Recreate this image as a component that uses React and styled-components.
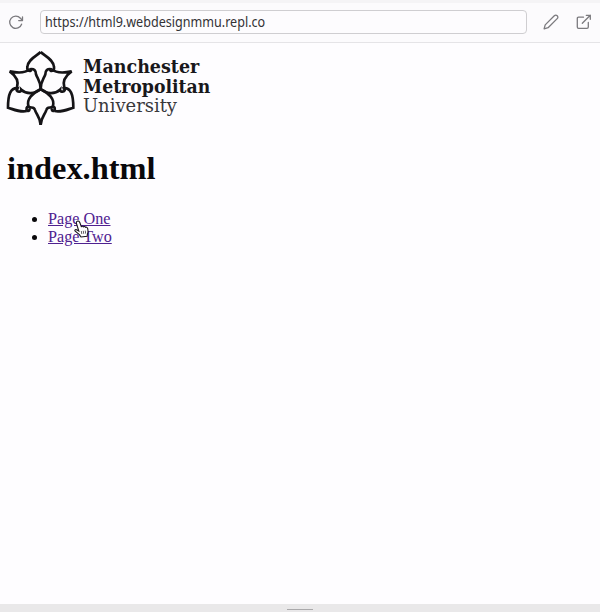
import React from "react";
import styled, { createGlobalStyle } from "styled-components";

const GlobalStyle = createGlobalStyle`
  * { box-sizing: border-box; }
  body { margin: 0; background: #fefdff; }
`;

const Browser = styled.div`
  display: flex;
  flex-direction: column;
  height: 612px;
  width: 600px;
  overflow: hidden;
  background: #fefdff;
`;

const Toolbar = styled.header`
  display: flex;
  align-items: center;
  height: 43px;
  flex: none;
  padding: 0 7px 1px 7px;
  background: #fcfbfd;
  border-top: 3px solid #f5f4f6;
  border-bottom: 1px solid #e5e4e7;
`;

const Address = styled.div`
  flex: none;
  width: 487px;
  height: 24px;
  margin-left: 15px;
  padding-left: 4px;
  border: 1px solid #cfced1;
  border-radius: 4px;
  background: #fdfcfe;
  color: #333235;
  font: 13.6px/22px "Noto Sans", sans-serif;
  white-space: nowrap;
`;

const AddressText = styled.span`
  display: inline-block;
  transform: scaleX(0.925);
  transform-origin: left;
`;

const ToolIcon = styled.svg`
  display: block;
  flex: none;
  width: 18px;
  height: 18px;
  margin-left: ${(p) => p.$gap || 0}px;
  fill: none;
  stroke: #7b7a7e;
  stroke-width: 1.3;
  stroke-linecap: round;
  stroke-linejoin: round;
`;

const Page = styled.main`
  flex: 1;
  padding: 2px 7px 0 0;
  color: #09080b;
  font-family: "Liberation Serif", "Times New Roman", serif;
`;

const Logo = styled.svg`
  display: block;
  width: 220px;
  height: 85px;
`;

const LogoName = styled.text`
  font-family: "DejaVu Serif", serif;
  font-size: 54px;
  font-weight: ${(p) => (p.$light ? 400 : 700)};
  fill: ${(p) => (p.$light ? "#39383b" : "#19181b")};
`;

const Heading = styled.h1`
  margin: 20px 0 0 7px;
  font-size: 32.4px;
  line-height: 37px;
`;

const Links = styled.ul`
  margin: 23px 0 0;
  padding-left: 48px;
  font-size: 16.2px;
  line-height: 18px;
`;

const Item = styled.li`
  position: relative;
`;

const Link = styled.a`
  color: #4f2190;
  text-decoration: underline;
`;

const Pointer = styled.svg`
  position: absolute;
  z-index: 1;
  left: 26px;
  top: 10px;
  width: 15px;
  height: 18px;
`;

const Drawer = styled.footer`
  display: flex;
  justify-content: center;
  height: 8px;
  padding-top: 5px;
  background: #e9e8e9;
`;

const Grip = styled.div`
  width: 26px;
  height: 1px;
  background: #aaa9ab;
`;

const names = [
  { text: "Manchester", y: 84, length: 349 },
  { text: "Metropolitan", y: 143, length: 382 },
  { text: "University", y: 202, length: 282, light: true },
];

function HalfFlower() {
  return (
    <g>
      <path d="M122 21C110 33 84 42 82 66C81 72 83 78 89 78C95 78 94 73 89 73" />
      <path d="M89 73C76 84 52 84 29 79C46 91 57 109 51 128" />
      <path d="M89 73C102 69 108 78 108 88C112 101 122 108 122 132" />
      <path d="M122 132C105 147 80 149 64 134C65 141 53 142 50 136C49 132 52 129 56 130" />
      <path d="M56 130C31 126 24 149 24 188C43 194 61 203 80 198" />
      <path d="M122 133C100 142 77 163 86 185C80 184 77 193 82 197C87 199 90 195 88 190" />
      <path d="M86 185C92 190 103 184 105 195C108 208 121 216 122 240" />
    </g>
  );
}

function UniversityLogo() {
  return (
    <Logo viewBox="0 0 660 255">
      <g fill="none" stroke="#151417" strokeWidth="8" strokeLinejoin="miter">
        <HalfFlower />
        <g transform="translate(244 0) scale(-1 1)">
          <HalfFlower />
        </g>
      </g>
      {names.map((n) => (
        <LogoName
          key={n.text}
          x="249"
          y={n.y}
          textLength={n.length}
          lengthAdjust="spacingAndGlyphs"
          $light={n.light}
        >
          {n.text}
        </LogoName>
      ))}
    </Logo>
  );
}

function HandPointer() {
  return (
    <Pointer viewBox="0 0 15 18">
      <path
        d="M3.2 1.3C4.5.5 5.4 1.4 5.9 2.8L7.3 6.6C8 6 9 6.2 9.3 6.9C10.2 6.3 11 6.5 11.4 7.3C12.7 6.8 13.4 7.5 13.7 8.7C14.2 11 14.2 12.5 13.4 14.2L13.1 16.3L7 17L5.4 14.7L1.2 11.2C.4 10.3 1.3 9.2 2.6 9.8L4.8 11.1L2.6 4C2.2 2.8 2.2 1.7 3.2 1.3Z"
        fill="#fff"
        stroke="#19171b"
        strokeWidth="1.1"
      />
      <path d="M7.3 11l.5 3M9.3 10.8l.4 3M11.3 10.6l.3 3" stroke="#39373b" strokeWidth=".8" />
    </Pointer>
  );
}

export default function App() {
  return (
    <Browser>
      <GlobalStyle />
      <Toolbar>
        <ToolIcon viewBox="0 0 18 18">
          <path d="M15.5 3.8V7.6H11.7M15.3 7.5L13.4 5.2A6.1 6.1 0 1 0 14.6 11.2" />
        </ToolIcon>
        <Address>
          <AddressText>https://html9.webdesignmmu.repl.co</AddressText>
        </Address>
        <ToolIcon viewBox="0 0 18 18" $gap={15}>
          <path d="M3.2 11.9L12.3 2.8C13.2 1.9 14.3 1.9 15.2 2.8C16.1 3.7 16.1 4.7 15.2 5.6L6.1 14.7L2.1 15.9Z" />
        </ToolIcon>
        <ToolIcon viewBox="0 0 18 18" $gap={15}>
          <path d="M8.5 4.2H3.6Q2.3 4.2 2.3 5.5V14Q2.3 15.3 3.6 15.3H12Q13.3 15.3 13.3 14V9.5M11.3 2.3H15.3V6.3M15.3 2.3L7.3 10.3" />
        </ToolIcon>
      </Toolbar>
      <Page>
        <UniversityLogo />
        <Heading>index.html</Heading>
        <Links>
          <Item>
            <Link>Page One</Link>
            <HandPointer />
          </Item>
          <Item>
            <Link>Page Two</Link>
          </Item>
        </Links>
      </Page>
      <Drawer>
        <Grip />
      </Drawer>
    </Browser>
  );
}
